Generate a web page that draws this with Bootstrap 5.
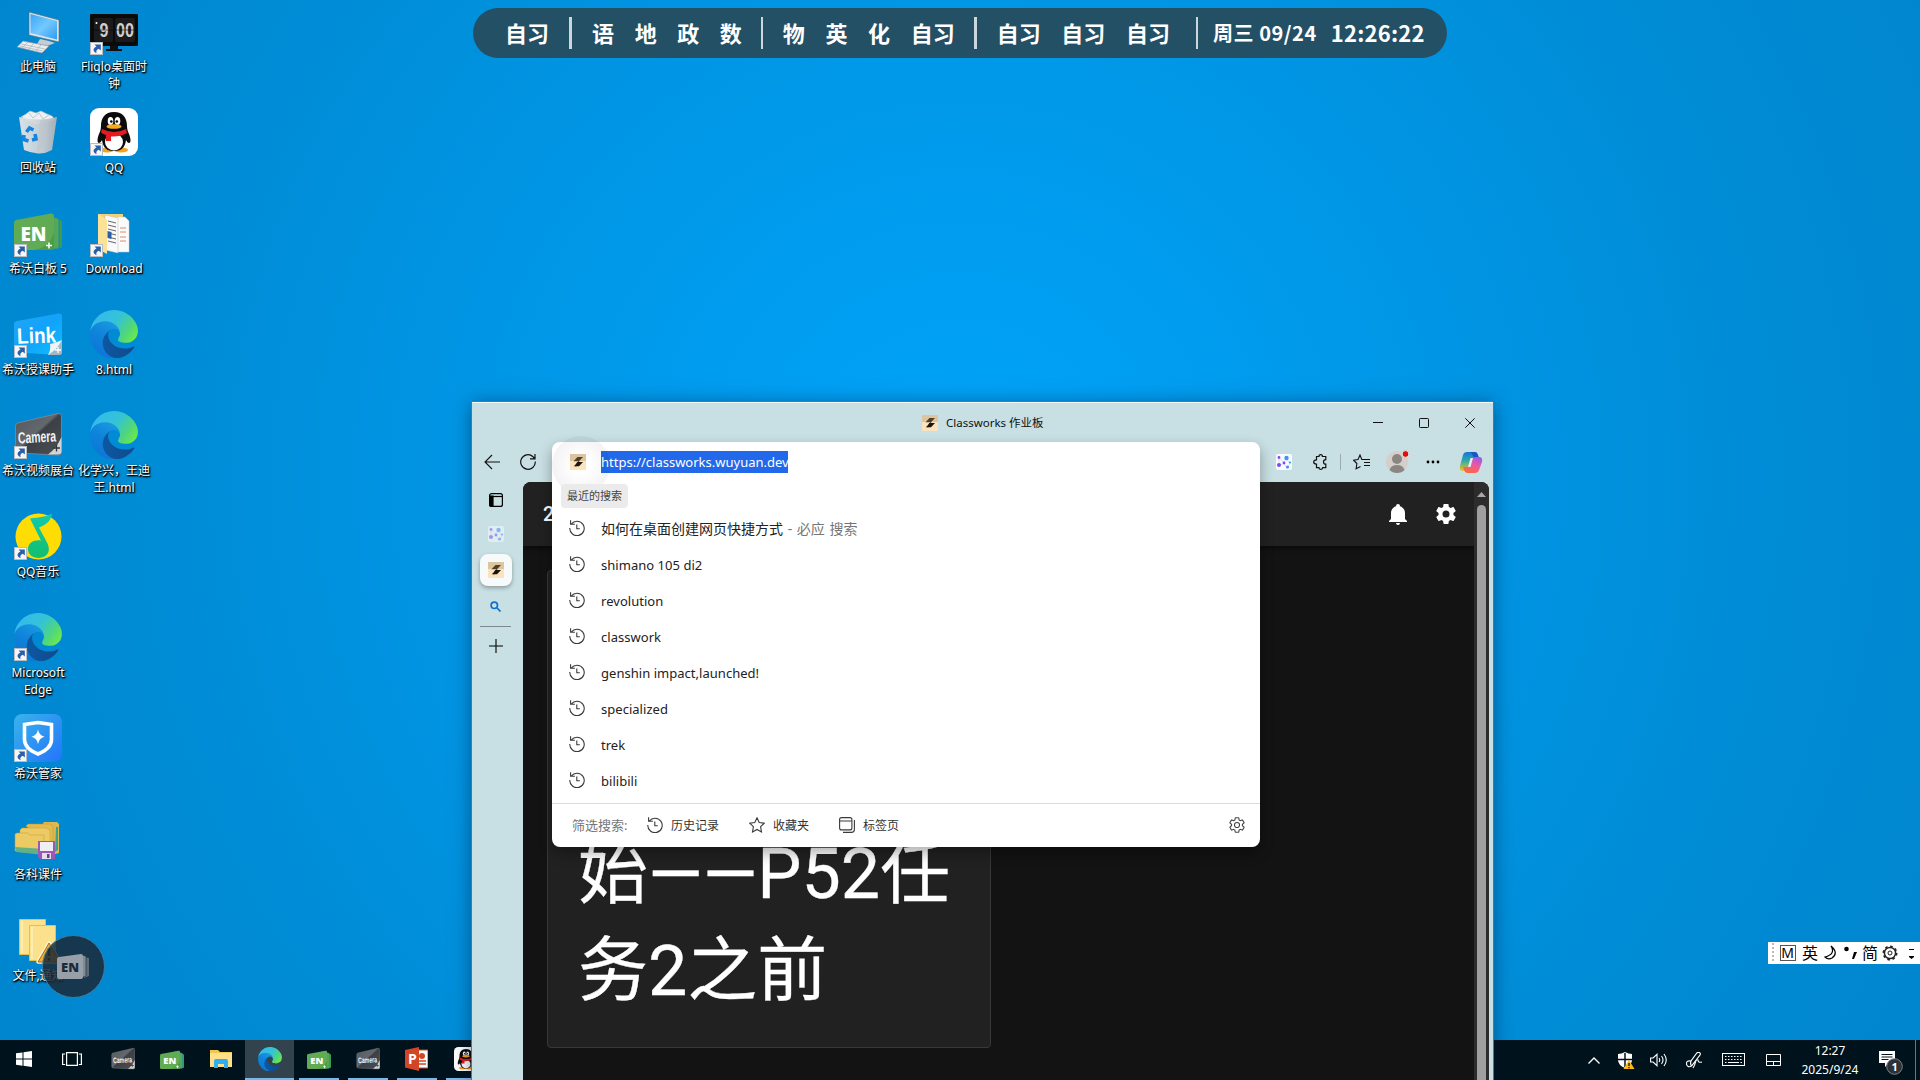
<!DOCTYPE html>
<html lang="zh-CN">
<head>
<meta charset="utf-8">
<title>桌面</title>
<link href="https://cdn.jsdelivr.net/npm/bootstrap@5.3.0/dist/css/bootstrap.min.css" rel="stylesheet">
<script src="https://cdn.jsdelivr.net/npm/bootstrap@5.3.0/dist/js/bootstrap.bundle.min.js"></script>
<style>
body{width:1920px;height:1080px;font-family:"Noto Sans","Noto Sans CJK SC",sans-serif;font-size:12px;line-height:17px;color:#111;
 background:radial-gradient(circle at 960px 480px,#00a3f8 0,#009ff3 180px,#0096e5 500px,#008cd6 800px,#0086ce 1100px)}
svg{display:block;flex:none}
.desk-col{width:76px}
.desk-item{height:101px;padding-top:7px;color:#fff;text-align:center;white-space:nowrap;text-shadow:1px 1px 2px #000,0 1px 2px #000,1px 1px 1px rgba(0,0,0,.8)}
.desk-item svg{margin-bottom:3px;text-shadow:none}
.schedule{left:473px;top:8px;width:974px;height:50px;border-radius:25px;background:#245066;color:#fff;font-family:"Noto Sans CJK SC",sans-serif;font-weight:700;font-size:22px;line-height:50px;padding-left:32px;white-space:nowrap}
.schedule .grp{gap:20.6px}
.schedule span{margin-top:-2px}
.schedule .bar{width:3px;height:32px;background:#ccd6dc;margin:0 19.5px}
.schedule .bar.thin{width:2px}
.schedule .bar.wide{margin-right:20.5px}
.schedule .bar.last{margin:0 15px 0 26px}
.schedule .date{letter-spacing:.55px;margin-top:0}
.time{letter-spacing:.2px;margin-left:14px}
.taskbar{height:40px;background:#00131d;color:#fff}
.tb{width:49px;height:40px;border-bottom:2px solid transparent;position:relative}
.tb.sys{width:48px}
.tb.open::after{content:"";position:absolute;left:4.5px;right:4.5px;bottom:-2px;height:2px;background:#76b9ed}
.tb.active{background:#33434d}
.tb.active::after{left:0;right:0}
.win{left:472px;top:402px;width:1021px;height:678px;background:#c8dfe3;border-top:1px solid #f4fafb;box-shadow:0 0 0 1px #2583c6,0 2px 18px rgba(0,20,50,.5)}
.titlebar{height:39px}
.tabtitle{width:97px;white-space:nowrap;font-size:11.5px}
.wbtn{width:46px}
.toolbar{height:40px;padding-right:4px}
.tool{width:36px;height:40px}
.vtabs{width:47px;margin-right:4px}
.vt{height:36px}
.vt-top{margin-bottom:-2px}
.vt-on{width:32px;height:32px;border-radius:8px;background:#f7fafb;box-shadow:0 2px 4px rgba(0,0,0,.3)}
.page{width:966px;background:#131313;border-radius:8px 8px 0 0;overflow:hidden}
.appbar{height:64px;background:#212121;box-shadow:0 2px 5px rgba(0,0,0,.6);color:#fff;font:500 20px/64px Roboto,sans-serif;padding:0 16px 0 20px}
.task{margin:24px 0 0 24px;width:444px;height:478px;background:#212121;border:1px solid #383838;border-radius:4px;color:#fff;padding:0 20px 0 30px;font-family:Roboto,"Noto Sans CJK SC",sans-serif;font-size:70px;line-height:97px;-webkit-text-stroke:.3px #fff}
.task div{margin-bottom:27px}
.scroller{width:15px;background:#2c2c2c}
.thumb{width:9px;border-radius:5px 5px 0 0;background:#9f9f9f}
.omni{left:80px;top:39px;width:708px;height:405px;background:#fff;border-radius:8px;box-shadow:0 6px 14px rgba(0,0,0,.32);font-size:13px;color:#222}
.halo{left:0;top:-6px;width:58px;height:58px;border-radius:50%;background:radial-gradient(circle,rgba(0,0,0,.0) 20%,rgba(0,0,0,.075) 100%)}
.urlrow{height:40px;padding-left:18px}
.sel{background:#2168ea;color:#fff;height:22px;line-height:22px;width:187px;font-size:13px;white-space:nowrap}
.hint{margin:2px 0 2px 9px;width:67px;height:24px;border-radius:4px;background:#ebebeb;color:#444;font-size:11px;line-height:23px;position:relative;text-align:center}
.sug{height:36px;padding-left:17px;gap:16px;white-space:nowrap}
.sug>span{padding-top:3px;letter-spacing:.03px}
.sug>.zh{font-size:14px;padding-top:1px;letter-spacing:0}
.zh>span{color:#767676;word-spacing:1px}
.omnifoot{height:44px;border-top:1px solid #dcdcdc;font-size:12px;color:#333;padding:0 15px 1px 20px;white-space:nowrap}
.ime{left:1768px;top:942px;width:152px;height:22px;background:#fff;font-size:16px;line-height:22px;color:#000;overflow:hidden}
.ball{left:42px;top:935px;width:63px;height:63px;border-radius:50%;background:rgba(27,42,56,.86);border:1px solid #3c7fa8}
.clock{width:66px;font-size:12px;line-height:19px;text-align:center;margin-top:-1px}
</style>
</head>
<body class="position-relative overflow-hidden m-0">
<svg width="0" height="0" class="position-absolute">
 <defs>
  <linearGradient id="e1" x1="0" y1="0" x2="1" y2="0"><stop offset="0" stop-color="#0c59a4"/><stop offset="1" stop-color="#114a8b"/></linearGradient>
  <linearGradient id="e2" x1=".8" y1="0" x2=".3" y2="1"><stop offset="0" stop-color="#1b9de2"/><stop offset=".5" stop-color="#0f83da"/><stop offset="1" stop-color="#0d74d6"/></linearGradient>
  <linearGradient id="e3" x1="0" y1=".2" x2="1" y2=".7"><stop offset="0" stop-color="#35b8f1"/><stop offset=".5" stop-color="#34c3d6"/><stop offset=".8" stop-color="#4fd67c"/><stop offset="1" stop-color="#69e84f"/></linearGradient>
  <linearGradient id="lk" x1="0" y1="0" x2="1" y2="1"><stop offset="0" stop-color="#22a6f6"/><stop offset=".5" stop-color="#12a2fa"/><stop offset="1" stop-color="#0cc0ff"/></linearGradient>
  <linearGradient id="cm" x1="0" y1="0" x2="1" y2="1"><stop offset="0" stop-color="#52575c"/><stop offset=".45" stop-color="#63686e"/><stop offset=".5" stop-color="#3c4045"/><stop offset="1" stop-color="#4c5156"/></linearGradient>
  <linearGradient id="gj" x1="0" y1="0" x2="1" y2="1"><stop offset="0" stop-color="#38b4ea"/><stop offset="1" stop-color="#2474fb"/></linearGradient>
  <linearGradient id="pc" x1="0" y1="0" x2="1" y2="1"><stop offset="0" stop-color="#3aa6f5"/><stop offset=".5" stop-color="#74c8ff"/><stop offset="1" stop-color="#2c9cf0"/></linearGradient>
  <linearGradient id="bin" x1="0" y1="0" x2="1" y2="0"><stop offset="0" stop-color="#e2e6e9"/><stop offset=".6" stop-color="#cbd0d4"/><stop offset="1" stop-color="#aab1b6"/></linearGradient>
  <linearGradient id="cpa" x1="0" y1="0" x2="0" y2="1"><stop offset="0" stop-color="#1674d8"/><stop offset=".45" stop-color="#2ea9a8"/><stop offset="1" stop-color="#f3c51c"/></linearGradient>
  <linearGradient id="cpb" x1=".8" y1="0" x2=".3" y2="1"><stop offset="0" stop-color="#9a58ee"/><stop offset=".5" stop-color="#ee5a9a"/><stop offset="1" stop-color="#fb6a3c"/></linearGradient>
  <linearGradient id="nt" x1="0" y1="0" x2="0" y2="1"><stop offset="0" stop-color="#12c9b0"/><stop offset="1" stop-color="#12bf6d"/></linearGradient>
 </defs>
 <symbol id="edge" viewBox="4 0 257 257">
  <path fill="url(#e1)" d="M235.68 195.46a93.73 93.73 0 0 1-10.54 4.71 101.87 101.87 0 0 1-35.9 6.46c-47.32 0-88.54-32.55-88.54-74.32A31.48 31.48 0 0 1 117.13 104.71c-42.8 1.8-53.8 46.4-53.8 72.53 0 73.88 68.09 81.37 82.76 81.37 7.91 0 19.84-2.3 27-4.56l1.31-.44A128.34 128.34 0 0 0 240.7 201.2a4 4 0 0 0-5.02-5.74z"/>
  <path fill="url(#e2)" d="M110.34 246.34A79.2 79.2 0 0 1 87.6 225a80.72 80.72 0 0 1 29.53-120c3.12-1.47 8.45-4.13 15.54-4a32.35 32.35 0 0 1 25.69 13 31.88 31.88 0 0 1 6.36 18.66c0-.21 24.46-79.6-80-79.6-43.9 0-80 41.66-80 78.21a130.15 130.15 0 0 0 12.11 56 128 128 0 0 0 156.38 67.11 75.55 75.55 0 0 1-62.78-8z"/>
  <path fill="url(#e3)" d="M156.94 153.78c-.81 1.05-3.3 2.5-3.3 5.66 0 2.61 1.7 5.12 4.72 7.23 14.38 10 41.49 8.68 41.56 8.68a59.56 59.56 0 0 0 30.27-8.35 61.38 61.38 0 0 0 30.43-52.88c.26-22.41-8-37.31-11.34-43.91C228.09 28.76 182.35.2 132.61.2a128 128 0 0 0-128 126.2c.48-36.54 36.8-66.05 80-66.05 3.5 0 23.46.34 42 10.07 16.34 8.58 24.9 18.94 30.85 29.21 6.18 10.67 7.28 24.15 7.28 29.52s-2.74 13.33-7.8 19.91z"/>
 </symbol>
 <symbol id="cut" viewBox="0 0 13 13"><rect width="13" height="13" fill="#f6f6f6"/><rect x=".5" y=".5" width="12" height="12" fill="none" stroke="#b9bdc2"/><path d="M4.500 2.500h6.300v6l-2-1.800C6.500 7.500 6 9 6.500 11.300 3 10 2.300 6.500 6.500 4.600z" fill="#2a5ea8"/></symbol>
 <symbol id="en" viewBox="0 0 48 48"><path d="M34 7l12 3q2 .5 2 2v24q0 2-2 2H34z" fill="#3f9c4b"/><path d="M30 5l13 3q2 .5 2 2v27q0 2-2 2H30z" fill="#53a758" stroke="#0a86c0" stroke-width=".7"/><path d="M2 10L37 3.500Q40 3 40 6v31q0 3-3 3H3q-3 0-3-3V13q0-2.500 2-3z" fill="#61ab55"/><path d="M40 22q-4 15-20 18h17q3 0 3-3z" fill="#4f9c46"/><path d="M32 35.500h6m-3-3v6" stroke="#fff" stroke-width="1.500"/><text x="6.500" y="30.500" font-family="Open Sans" font-weight="800" font-size="19" fill="#fff" textLength="26" lengthAdjust="spacingAndGlyphs">EN</text></symbol>
 <symbol id="cam" viewBox="0 0 48 48"><path d="M4 12L44 2.500Q47 2 47.500 5v36q0 3-3 3L4 42q-2.500 0-2.500-3V15q0-2.500 2.500-3z" fill="url(#cm)" stroke="#85898d" stroke-width=".8"/><path d="M47.500 26Q42 38 34 43.500h10q3.500 0 3.500-3z" fill="#d2d5d8"/><path d="M39 37h7m-3.500-3.500v7" stroke="#333" stroke-width="1.300"/><text x="4" y="31.500" font-family="Liberation Sans" font-weight="700" font-size="16" fill="#f2f4f5" textLength="38" lengthAdjust="spacingAndGlyphs" transform="rotate(-3 24 25)">Camera</text></symbol>
 <symbol id="qq" viewBox="0 0 48 48"><rect width="48" height="48" rx="9" fill="#fff"/><ellipse cx="17" cy="42" rx="7" ry="2.500" fill="#f9a11b"/><ellipse cx="31" cy="42" rx="7" ry="2.500" fill="#f9a11b"/><path d="M24 4c9 0 13 6 13 14 0 3 1 6 2 8 2 5 2 9 0 9-1 0-2-1-3-3-1 8-5 11-12 11s-11-3-12-11c-1 2-2 3-3 3-2 0-2-4 0-9 1-2 2-5 2-8C11 10 15 4 24 4z" fill="#0b0b0b"/><ellipse cx="24" cy="34" rx="9" ry="8.500" fill="#fff"/><ellipse cx="20.500" cy="13" rx="2.800" ry="4" fill="#fff"/><ellipse cx="27.500" cy="13" rx="2.800" ry="4" fill="#fff"/><circle cx="21.300" cy="13.500" r="1.300"/><circle cx="26.800" cy="13.500" r="1.300"/><ellipse cx="24" cy="18.500" rx="7.500" ry="2.300" fill="#f9a91b"/><path d="M12 21q12 6 24 0l1 4q-7 4-16 3.500V33h-5v-6q-3-1-5-2.500z" fill="#e31b23"/></symbol>
 <symbol id="fav" viewBox="0 0 16 16"><rect width="16" height="16" rx="1" fill="#fbe3bd"/><path d="M0 0h16v7H0z" fill="#dcc59f"/><path d="M7.500 3H13L9 7.200H3.500z" fill="#4d4029"/><path d="M7.500 8H13L9 12.200H3.800L6 10z" fill="#1c150a"/><path d="M9 7L7 8.500 5.500 13 9.500 9z" fill="#1c150a"/></symbol>
 <symbol id="net" viewBox="0 0 16 16"><rect width="16" height="16" rx="2" fill="#f8fbff"/><path d="M3 3l5 6 2-5 4 6-3 4-3-5-5 3z" fill="none" stroke="#c3ccff" stroke-width=".6"/><g fill="#7a4bf5"><circle cx="3" cy="3.500" r="1.400"/><circle cx="3" cy="11" r="2"/><circle cx="8" cy="9" r="1.400"/></g><g fill="#4a8ff5"><circle cx="10.500" cy="4" r="2.200"/><circle cx="14" cy="8.500" r="1.100"/><circle cx="11.500" cy="13" r="1.600"/></g></symbol>
 <symbol id="hist" viewBox="0 0 16 16"><path d="M2.300 4A7.200 7.200 0 1 1 .8 8M1.600 .2v4h4.300M7.800 4.500v4.300h3" fill="none" stroke="#3a3a3a" stroke-width="1.100"/></symbol>
 <symbol id="cog" viewBox="0 0 24 24"><path d="M12,15.500A3.500,3.500 0 0,1 8.500,12A3.500,3.500 0 0,1 12,8.500A3.500,3.500 0 0,1 15.500,12A3.500,3.500 0 0,1 12,15.500M19.430,12.970C19.470,12.650 19.500,12.330 19.500,12C19.500,11.670 19.470,11.340 19.430,11L21.540,9.370C21.730,9.220 21.780,8.950 21.660,8.730L19.660,5.270C19.540,5.050 19.270,4.960 19.050,5.050L16.560,6.050C16.040,5.660 15.500,5.320 14.870,5.070L14.500,2.420C14.460,2.180 14.250,2 14,2H10C9.750,2 9.540,2.180 9.500,2.420L9.130,5.070C8.500,5.320 7.960,5.660 7.440,6.050L4.950,5.050C4.730,4.960 4.460,5.050 4.340,5.270L2.340,8.730C2.210,8.950 2.270,9.220 2.460,9.370L4.570,11C4.530,11.340 4.500,11.670 4.500,12C4.500,12.330 4.530,12.650 4.570,12.970L2.460,14.630C2.270,14.780 2.210,15.050 2.340,15.270L4.340,18.730C4.460,18.950 4.730,19.030 4.950,18.950L7.440,17.940C7.960,18.340 8.500,18.680 9.130,18.930L9.500,21.580C9.540,21.820 9.750,22 10,22H14C14.250,22 14.460,21.820 14.500,21.580L14.870,18.930C15.500,18.670 16.040,18.340 16.560,17.940L19.050,18.950C19.270,19.030 19.540,18.950 19.660,18.730L21.660,15.270C21.780,15.050 21.730,14.780 21.540,14.630L19.430,12.970Z"/></symbol>
</svg>

<!-- Desktop icons -->
<div class="d-flex position-absolute top-0 start-0">
 <div class="desk-col d-flex flex-column">
  <div class="desk-item d-flex flex-column align-items-center"><svg width="48" height="48"><path d="M15 5l30 8v22l-30-7z" fill="#dfe4e8" stroke="#5d666d" stroke-width=".6"/><path d="M16.500 7L43 14v18.500L16.500 26z" fill="url(#pc)"/><path d="M26 32l9 2 6 2-8 3-10-2z" fill="#c6ccd1"/><path d="M9 34l26 5-7 7L3 40z" fill="#e8ecef" stroke="#8a949b" stroke-width=".7"/><path d="M7 37l24 5M5.500 39l23 5M14 35l-6 6M20 36l-6 7M27 38l-6 7" stroke="#a9b1b7" stroke-width=".7"/></svg>此电脑</div>
  <div class="desk-item d-flex flex-column align-items-center"><svg width="48" height="48"><path d="M7 9L12 6l4-3 6 2 5-2 6 3 5 2 3 4-20 4z" fill="#eef1f3" stroke="#b5bcc1" stroke-width=".6"/><path d="M15 5l4 5 6-5 4 6 6-4" stroke="#bfc6cb" fill="none"/><path d="M5 9q18 5 38 0l-5 33q-7 4-14 3.500T10 42z" fill="url(#bin)" opacity=".95"/><path d="M26 12l-3 33 8-9 4-24z" fill="#bcc3c8" opacity=".5"/><g fill="none" stroke="#1484e0" stroke-width="3.600"><path d="M12.500 24l3-4 4 2"/><path d="M21 26l1 5-4 1"/><path d="M10 27l-.5 4.500 5 1.500"/></g></svg>回收站</div>
  <div class="desk-item d-flex flex-column align-items-center"><svg width="48" height="48"><use href="#en" width="48" height="48" y="1"/><use href="#cut" y="35" width="13" height="13"/></svg>希沃白板 5</div>
  <div class="desk-item d-flex flex-column align-items-center"><svg width="48" height="48"><path d="M3 11L45 3.500Q48 3 48 6v36q0 3-3 3L3 42.500Q0 42 0 39V14q0-2.500 3-3z" fill="url(#lk)"/><path d="M48 30Q43 40 34 45h11q3 0 3-3z" fill="#a8b4bf"/><path d="M48 30q-6 3-12 4 1 6-2 11 9-5 14-15z" fill="#eef3f6"/><path d="M41 40h6m-3-3v6" stroke="#fff" stroke-width="1.300"/><text x="3" y="33" font-family="Liberation Sans" font-weight="700" font-size="22" fill="#fff" textLength="39" lengthAdjust="spacingAndGlyphs" transform="rotate(-2 24 24)">Link</text><use href="#cut" y="35" width="13" height="13"/></svg>希沃授课助手</div>
  <div class="desk-item d-flex flex-column align-items-center"><svg width="48" height="48"><use href="#cam" width="48" height="48"/><use href="#cut" y="35" width="13" height="13"/></svg>希沃视频展台</div>
  <div class="desk-item d-flex flex-column align-items-center"><svg width="48" height="48"><circle cx="24.500" cy="24.500" r="23" fill="#ffdc04"/><path d="M16 6.500c10-1 16-2 22-5-1 7-5 11-13 14l8 15c5 10-1 15-8 15.500-7 0-11-4-11-9 0-6 6-9.500 13-8.500z" fill="url(#nt)"/><use href="#cut" y="35" width="13" height="13"/></svg>QQ音乐</div>
  <div class="desk-item d-flex flex-column align-items-center"><svg width="48" height="48"><use href="#edge" width="48" height="48"/><use href="#cut" y="35" width="13" height="13"/></svg>Microsoft<br>Edge</div>
  <div class="desk-item d-flex flex-column align-items-center"><svg width="48" height="48"><rect width="48" height="48" rx="8" fill="url(#gj)"/><path d="M24 8.500q7 1 13.500 2v15q0 9-13.500 14.500Q10.500 34.500 10.500 25.500v-15Q17 9.500 24 8.500z" fill="none" stroke="#fff" stroke-width="3.600"/><path d="M24 15.500q1 6 6.500 7.200Q25 24 24 30q-1-6-6.500-7.300Q23 21.500 24 15.500z" fill="#fff"/><use href="#cut" y="35" width="13" height="13"/></svg>希沃管家</div>
  <div class="desk-item d-flex flex-column align-items-center"><svg width="48" height="48"><path d="M28 10l2-3h13l2 2v29l-8 2z" fill="#e0b94e"/><path d="M42 12h2v23l-3 2z" fill="#32a78e"/><path d="M12 11l2-2h22l3 2v24z" fill="#e3bc50" stroke="#b9922f" stroke-width=".5"/><path d="M6 15l2-2h24l4 2v22H6z" fill="#edca63" stroke="#c29c3c" stroke-width=".5"/><path d="M1 19l2-1h11l2 2h14v18L1 36z" fill="#ecca64" stroke="#c09a39" stroke-width=".5"/><path d="M1 32l29 2v6L2 37z" fill="#62b083"/><path d="M24 26h17v18H26l-2-2z" fill="#9b59b6"/><path d="M26 27h13v9H26z" fill="#f0eef5"/><path d="M28 38h9v6h-9z" fill="#e2dfea"/><path d="M33 39h2.500v4H33z" fill="#6f3d87"/></svg>各科课件</div>
  <div class="desk-item d-flex flex-column align-items-center"><svg width="48" height="48"><g fill="#fbe18b" stroke="#e5c04c"><path d="M5.500 3.500h26v35h-26z"/><path d="M15.500 9.500h26v35h-26z"/></g><path d="M8 5v32M18 11v32" stroke="#fff1bd" stroke-width="1.500"/><path d="M35 27L46 46H24z" fill="#f0b030" stroke="#fff3d0" stroke-width="3.500" stroke-linejoin="round"/><path d="M35 27L46 46H24z" fill="#f0b030" stroke="#a86a1a" stroke-linejoin="round"/><path d="M35 32v8m0 2v2.500" stroke="#3a2a10" stroke-width="2.500"/></svg>文件,通知</div>
 </div>
 <div class="desk-col d-flex flex-column">
  <div class="desk-item d-flex flex-column align-items-center"><svg width="48" height="48"><rect y="7" width="48" height="32" rx="1" fill="#0a0a0a"/><path d="M20 39h8v3h4v2H16v-2h4z" fill="#101010"/><g fill="#1b1b1b"><rect x="4" y="11" width="19" height="24" rx="2"/><rect x="25" y="11" width="20" height="24" rx="2"/></g><g font-family="Liberation Sans Narrow,Liberation Sans" font-weight="700" font-size="20" fill="#cfcfcf"><text x="9.500" y="30" textLength="9" lengthAdjust="spacingAndGlyphs">9</text><text x="26" y="30" textLength="18" lengthAdjust="spacingAndGlyphs">00</text></g><circle cx="6.500" cy="16" r="1" fill="#fff"/><path d="M4 23h41" stroke="#0a0a0a" stroke-width=".6"/><use href="#cut" y="35" width="13" height="13"/></svg><span>Fliqlo桌面时<br>钟</span></div>
  <div class="desk-item d-flex flex-column align-items-center"><svg width="48" height="48"><use href="#qq" width="48" height="48"/><use href="#cut" y="35" width="13" height="13"/></svg>QQ</div>
  <div class="desk-item d-flex flex-column align-items-center"><svg width="48" height="48"><path d="M8 5h25v35H8z" fill="#f1d27a"/><path d="M27 8h8l4 4v31H27z" fill="#fbfbfb" stroke="#ccc" stroke-width=".5"/><path d="M30 19h6m-6 4h6m-6 5h6m-6 4h6" stroke="#d98b6a"/><path d="M15 6l13 3v35l-13-3z" fill="#fafafa" stroke="#bbb" stroke-width=".5"/><path d="M18 12l8 2m-8 2l8 2m-8 2l8 2m-8 2l8 2m-8 2l8 2m-8 2l8 2" stroke="#555" stroke-width=".9"/><path d="M17.500 22l4 1v7l-4-1z" fill="#2b5fa8"/><path d="M8 5l9 6v34l-9-5z" fill="#fce296"/><use href="#cut" y="35" width="13" height="13"/></svg>Download</div>
  <div class="desk-item d-flex flex-column align-items-center"><svg width="48" height="48"><use href="#edge" width="48" height="48"/></svg>8.html</div>
  <div class="desk-item d-flex flex-column align-items-center"><svg width="48" height="48"><use href="#edge" width="48" height="48"/></svg>化学兴，王迪<br>王.html</div>
 </div>
</div>
<div class="ball position-absolute d-flex align-items-center justify-content-center"><svg width="33" height="27" viewBox="0 0 33 27"><path d="M27 4l5 1v18l-5 2z" fill="#5c6b78"/><path d="M24 2l5 1v20l-5 2z" fill="#7f8b95" stroke="#1b2b3c" stroke-width=".6"/><path d="M2 4l22-3q2 0 2 2v21q0 2-2 2H2q-2 0-2-2V6q0-2 2-2z" fill="#97a0a8"/><text x="4" y="19" font-family="Open Sans" font-weight="800" font-size="12" fill="#1b2b3c" textLength="18" lengthAdjust="spacingAndGlyphs">EN</text></svg></div>

<!-- Class schedule strip -->
<div class="schedule position-absolute d-flex align-items-center">
 <div class="grp d-flex"><span>自习</span></div><div class="bar wide"></div>
 <div class="grp d-flex"><span>语</span><span>地</span><span>政</span><span>数</span></div><div class="bar thin"></div>
 <div class="grp d-flex"><span>物</span><span>英</span><span>化</span><span>自习</span></div><div class="bar"></div>
 <div class="grp d-flex"><span>自习</span><span>自习</span><span>自习</span></div><div class="bar thin last"></div>
 <span class="date fs-5">周三 09/24</span><span class="time">12:26:22</span>
</div>

<!-- Input method bar -->
<div class="ime position-absolute d-flex align-items-center">
 <svg width="152" height="22" class="position-absolute"><path d="M5 1v20" stroke="#bbb" stroke-width="2" stroke-dasharray="2 2"/><rect x="12.500" y="3.500" width="15" height="15" fill="none" stroke="#555"/><path d="M63 4q5 8-6 11 3 3 7 1 7-5-1-12z" fill="none" stroke="#000" stroke-width="1.200"/><circle cx="78.500" cy="7" r="2.300"/><path d="M86 10h3l-3 7h-2z"/><circle cx="122" cy="11" r="5.600" fill="none" stroke="#222" stroke-width="1.500"/><circle cx="122" cy="11" r="6.700" fill="none" stroke="#222" stroke-width="1.600" stroke-dasharray="2.600 2.660"/><circle cx="122" cy="11" r="2" fill="none" stroke="#222"/><path d="M141 7.500h5M141 14.500h5l-2.500 2z" stroke="#000" fill="#000"/></svg>
 <span class="text-center" style="width:15px;margin-left:12px;font-size:14px">M</span><span style="margin-left:7px">英</span><span style="margin-left:44px">简</span>
</div>

<!-- Taskbar -->
<div class="taskbar position-absolute bottom-0 start-0 w-100 d-flex align-items-center justify-content-between">
 <div class="d-flex">
  <div class="tb sys d-flex align-items-center justify-content-center"><svg width="16" height="16" fill="#fff"><path d="M0 2.300L6.500 1.400v6.200H0zM7.500 1.200L16 0v7.600H7.500zM0 8.500h6.500v6.200L0 13.800zM7.500 8.500H16V16l-8.500-1.200z"/></svg></div>
  <div class="tb sys d-flex align-items-center justify-content-center"><svg width="20" height="16" fill="none" stroke="#fff" stroke-width="1.200"><path d="M4.600 1.600h10.800v12.800H4.600zM3.200 3H.6v10.500h2.600M16.800 3h2.600v10.500h-2.600"/></svg></div>
  <div class="tb d-flex align-items-center justify-content-center" style="margin-left:2px"><svg width="24" height="24"><use href="#cam" width="24" height="24"/></svg></div>
  <div class="tb d-flex align-items-center justify-content-center"><svg width="24" height="24"><use href="#en" width="24" height="24" y="2"/></svg></div>
  <div class="tb d-flex align-items-center justify-content-center"><svg width="22" height="20"><path d="M0 1h8l2 2h12v15H0z" fill="#f3c64f"/><path d="M0 4h22v14H0z" fill="#ffe08a"/><path d="M4 19v-7q0-2 2-2h10q2 0 2 2v7h-4v-4H8v4z" fill="#30aef0"/></svg></div>
  <div class="tb open active d-flex align-items-center justify-content-center"><svg width="24" height="24"><use href="#edge" width="24" height="24"/></svg></div>
  <div class="tb open d-flex align-items-center justify-content-center"><svg width="24" height="24"><use href="#en" width="24" height="24" y="2"/></svg></div>
  <div class="tb open d-flex align-items-center justify-content-center"><svg width="24" height="24"><use href="#cam" width="24" height="24"/></svg></div>
  <div class="tb open d-flex align-items-center justify-content-center"><svg width="23" height="24"><path d="M10 3h13v18H10z" fill="#fff" stroke="#d24625"/><circle cx="17" cy="9" r="3" fill="#d24625"/><path d="M14 14h7m-7 3h7" stroke="#d24625" stroke-width="1.500"/><path d="M0 3L14 0v24L0 20.500z" fill="#d24625"/><text x="3" y="17" font-family="Open Sans" font-weight="700" font-size="14" fill="#fff">P</text></svg></div>
  <div class="tb open d-flex align-items-center justify-content-center"><svg width="24" height="24"><use href="#qq" width="24" height="24"/></svg></div>
 </div>
 <div class="d-flex align-items-center h-100">
  <svg width="12" height="7" fill="none" stroke="#fff" stroke-width="1.400"><path d="M.5 6.500L6 1l5.500 5.500"/></svg>
  <svg width="17" height="17" style="margin-left:18px"><path d="M7 0q3.500 2 7 2v6q0 5-7 8Q0 13 0 8V2q3.500 0 7-2z" fill="#fff"/><path d="M7 1v14M0 7.500h14" stroke="#00131d" stroke-width="1.500"/><path d="M11 8l5.500 9h-11z" fill="#fdb913"/><path d="M11 11v3m0 1v1.300" stroke="#000" stroke-width="1.200"/></svg>
  <svg width="18" height="14" style="margin-left:15px" fill="none" stroke="#fff" stroke-width="1.100"><path d="M.6 5h2.500L7 1.300v11.400L3.100 9H.6zM9 5q1.500 2 0 4M11.500 3q3 4 0 8M14 1q4.500 6 0 12"/></svg>
  <svg width="17" height="17" style="margin-left:18px" fill="none" stroke="#fff" stroke-width="1.200"><path d="M5 9q-5-1-4.500 3.500Q2 16 5.500 14L14 3q1-2-1-2.500T10 2L5 9q-1 3 .5 5M7 16q2-3 2.500-6t2.500-2q0 3 4 2"/></svg>
  <svg width="24" height="14" style="margin-left:19px" fill="none" stroke="#fff"><rect x=".5" y=".5" width="22" height="12"/><path d="M3 3.500h17M3 6.500h17" stroke-dasharray="1.500 1.500"/><path d="M3 9.500h1.500m1.500 0h11m1.500 0H20"/></svg>
  <svg width="16" height="12" style="margin-left:20px" fill="none" stroke="#fff"><path d="M.5.5h14v11H.5zM.5 7.500h14M7.500 7.500v4"/></svg>
  <div class="clock" style="margin-left:15px">12:27<br>2025/9/24</div>
  <svg width="27" height="26" style="margin:6px 0 0 16px"><path d="M0 1h16v12h-6l-4 4v-4H0z" fill="#fff"/><path d="M2.500 4.500h11M2.500 7h11m-11 2.500h7" stroke="#00131d"/><circle cx="15.500" cy="16.500" r="7.800" fill="#2b3237" stroke="#7d8387"/><text x="12.500" y="20.500" font-family="Open Sans" font-weight="700" font-size="11" fill="#fff">1</text></svg>
  <div class="border-start h-100 border-secondary" style="width:5px;margin-left:9px"></div>
 </div>
</div>

<!-- Browser window -->
<div class="win position-absolute d-flex flex-column">
 <div class="titlebar d-flex align-items-center">
  <div class="col"></div>
  <div class="d-flex align-items-center gap-2"><svg width="16" height="16"><use href="#fav"/></svg><span class="tabtitle">Classworks 作业板</span></div>
  <div class="col d-flex justify-content-end">
   <div class="wbtn d-flex justify-content-center"><svg width="10" height="10" stroke="#111"><path d="M0 4.500h10"/></svg></div>
   <div class="wbtn d-flex justify-content-center"><svg width="10" height="10" fill="none" stroke="#111"><rect x=".5" y=".5" width="9" height="9" rx=".8"/></svg></div>
   <div class="wbtn d-flex justify-content-center"><svg width="10" height="10" stroke="#111"><path d="M.3.3l9.400 9.400M9.700.3L.3 9.700"/></svg></div>
  </div>
 </div>
 <div class="toolbar d-flex align-items-center">
  <div class="tool d-flex align-items-center justify-content-center" style="margin-left:2px"><svg width="16" height="16" fill="none" stroke="#111" stroke-width="1.100"><path d="M16 8H1M8 1L1 8l7 7"/></svg></div>
  <div class="tool d-flex align-items-center justify-content-center"><svg width="16" height="16" fill="none" stroke="#111" stroke-width="1.200"><path d="M15.300 7.500A7.300 7.300 0 1 1 12.800 2.500L15 4.800M15 0v4.900h-5"/></svg></div>
  <div class="tool ms-auto d-flex align-items-center justify-content-center"><svg width="16" height="16"><use href="#net"/></svg></div>
  <div class="tool d-flex align-items-center justify-content-center"><svg width="16" height="16" fill="none" stroke="#111" stroke-width="1.200"><path d="M4.500 2.500H7q-.2-1.900 1.700-1.900T10.400 2.500h3.400v3.200q-2.300 0-2.300 2.200t2.300 2.200v3.500H10.700q0 1.800-1.900 1.800T7 13.600H4.500v-3.400Q1.700 10 1.700 8t2.800-2.200z"/></svg></div>
  <div class="bg-secondary opacity-50" style="width:1px;height:16px;margin:0 2px"></div>
  <div class="tool d-flex align-items-center justify-content-center"><svg width="17" height="16" fill="none" stroke="#111" stroke-width="1.100"><path d="M10 5.500H8.800L7 1 5 5.500.6 6.200l3.300 3.300-.8 5.300L7.500 12.500M10 5.500h7M11 8.500h6M11 11.500h6"/></svg></div>
  <div class="tool d-flex align-items-center justify-content-center"><svg width="24" height="24"><circle cx="12" cy="12" r="11" fill="#d4cfcb"/><circle cx="12" cy="9" r="5" fill="#8b8681"/><path d="M4.500 20Q6 15 12 15t7.500 5q-3 3-7.500 3t-7.500-3z" fill="#8b8681"/><circle cx="20.500" cy="4" r="3.400" fill="#e00b0b" stroke="#dfe9eb" stroke-width="1"/></svg></div>
  <div class="tool d-flex align-items-center justify-content-center"><svg width="14" height="4"><circle cx="2" cy="2" r="1.400"/><circle cx="7" cy="2" r="1.400"/><circle cx="12" cy="2" r="1.400"/></svg></div>
  <div class="tool d-flex align-items-center justify-content-center" style="margin-left:2px"><svg width="24" height="21" viewBox="0 0 24 21"><path d="M8 0h8q2 0 3 3l1 4h-5l-3 8q-1 4-4 4H4q-4 0-3-5L4 3q1-3 4-3z" fill="url(#cpa)"/><path d="M8 0h8q2 0 3 3l1 4h-3q-2 0-3-3t-3-4z" fill="#1857c4"/><path d="M16 21H8q-2 0-3-3l-1-3h3q3 0 4-3l2-5q1-2 3-2h4q4 0 3 5l-3 8q-1 3-4 3z" fill="url(#cpb)"/><path d="M11.500 6H14l-2.500 9H9z" fill="#e6eef2"/></svg></div>
 </div>
 <div class="d-flex flex-fill">
  <div class="vtabs d-flex flex-column">
   <div class="vt vt-top d-flex align-items-center justify-content-center"><svg width="14" height="14" fill="none" stroke="#000" stroke-width="1.200"><rect x=".6" y=".6" width="12.800" height="12.800" rx="2"/><path d="M.6 3.500h12.800"/><path d="M.6 3h3.400v10.400H2q-1.400 0-1.400-2z" fill="#000"/></svg></div>
   <div class="vt d-flex align-items-center justify-content-center opacity-50"><svg width="16" height="16"><use href="#net"/></svg></div>
   <div class="vt d-flex align-items-center justify-content-center"><div class="vt-on d-flex align-items-center justify-content-center"><svg width="16" height="16"><use href="#fav"/></svg></div></div>
   <div class="vt d-flex align-items-center justify-content-center"><svg width="11" height="11" fill="none" stroke="#1273cf" stroke-width="1.700"><circle cx="4.300" cy="4.300" r="3.200"/><path d="M6.500 6.500l4 4"/></svg></div>
   <div class="mx-2" style="height:1px;margin:2px 0 1px;background:#7b898c"></div>
   <div class="vt d-flex align-items-center justify-content-center"><svg width="14" height="14" stroke="#000" stroke-width="1.100"><path d="M0 7h14M7 0v14"/></svg></div>
  </div>
  <div class="page d-flex">
   <div class="flex-fill">
    <div class="appbar d-flex align-items-center"><span>2</span>
     <svg class="ms-auto" width="24" height="24" fill="#fff"><path d="M21,19V20H3V19L5,17V11C5,7.900 7.030,5.170 10,4.290C10,4.190 10,4.100 10,4A2,2 0 0,1 12,2A2,2 0 0,1 14,4C14,4.100 14,4.190 14,4.290C16.970,5.170 19,7.900 19,11V17L21,19M14,21A2,2 0 0,1 12,23A2,2 0 0,1 10,21"/></svg>
     <svg width="24" height="24" fill="#fff" style="margin-left:24px"><use href="#cog" width="24" height="24"/></svg>
    </div>
    <div class="task d-flex flex-column justify-content-end"><div>始——P52任<br>务2之前</div></div>
   </div>
   <div class="scroller d-flex flex-column align-items-center"><svg width="9" height="5" style="margin:10px 0 8px" fill="#a8a8a8"><path d="M4.500 0L9 5H0z"/></svg><div class="thumb flex-fill"></div></div>
  </div>
 </div>

 <!-- Address bar with suggestions -->
 <div class="omni position-absolute d-flex flex-column">
  <div class="halo position-absolute"></div>
  <div class="urlrow d-flex align-items-center"><svg width="16" height="16" style="margin-right:15px"><use href="#fav"/></svg><span class="sel">https://classworks.wuyuan.dev</span></div>
  <div class="hint">最近的搜索</div>
  <div class="sug d-flex align-items-center"><svg width="16" height="16"><use href="#hist"/></svg><span class="zh">如何在桌面创建网页快捷方式<span> - 必应 搜索</span></span></div>
  <div class="sug d-flex align-items-center"><svg width="16" height="16"><use href="#hist"/></svg><span>shimano 105 di2</span></div>
  <div class="sug d-flex align-items-center"><svg width="16" height="16"><use href="#hist"/></svg><span>revolution</span></div>
  <div class="sug d-flex align-items-center"><svg width="16" height="16"><use href="#hist"/></svg><span>classwork</span></div>
  <div class="sug d-flex align-items-center"><svg width="16" height="16"><use href="#hist"/></svg><span>genshin impact,launched!</span></div>
  <div class="sug d-flex align-items-center"><svg width="16" height="16"><use href="#hist"/></svg><span>specialized</span></div>
  <div class="sug d-flex align-items-center"><svg width="16" height="16"><use href="#hist"/></svg><span>trek</span></div>
  <div class="sug d-flex align-items-center"><svg width="16" height="16"><use href="#hist"/></svg><span>bilibili</span></div>
  <div class="omnifoot d-flex align-items-center mt-auto">
   <span style="width:75px;font-size:13px;color:#767676">筛选搜索:</span>
   <svg width="16" height="16"><use href="#hist"/></svg><span style="width:78px;margin-left:8px">历史记录</span>
   <svg width="16" height="16" fill="none" stroke="#3a3a3a" stroke-width="1.100"><path d="M8 .8l2.200 4.700 5.100.7-3.700 3.500.9 5.200L8 12.400l-4.500 2.500.9-5.200L.7 6.200l5.100-.7z"/></svg><span style="width:66px;margin-left:8px">收藏夹</span>
   <svg width="16" height="16" fill="none" stroke="#3a3a3a" stroke-width="1.100"><rect x=".6" y=".6" width="12.300" height="12.300" rx="2"/><path d="M.6 4h12.300M15.400 3v9.500q0 2.900-2.900 2.900H4"/></svg><span style="margin-left:8px">标签页</span>
   <svg class="ms-auto" width="16" height="16" viewBox="1 1 22 22" fill="none" stroke="#444" stroke-width="1.500"><use href="#cog" width="24" height="24"/></svg>
  </div>
 </div>
</div>
</body>
</html>
